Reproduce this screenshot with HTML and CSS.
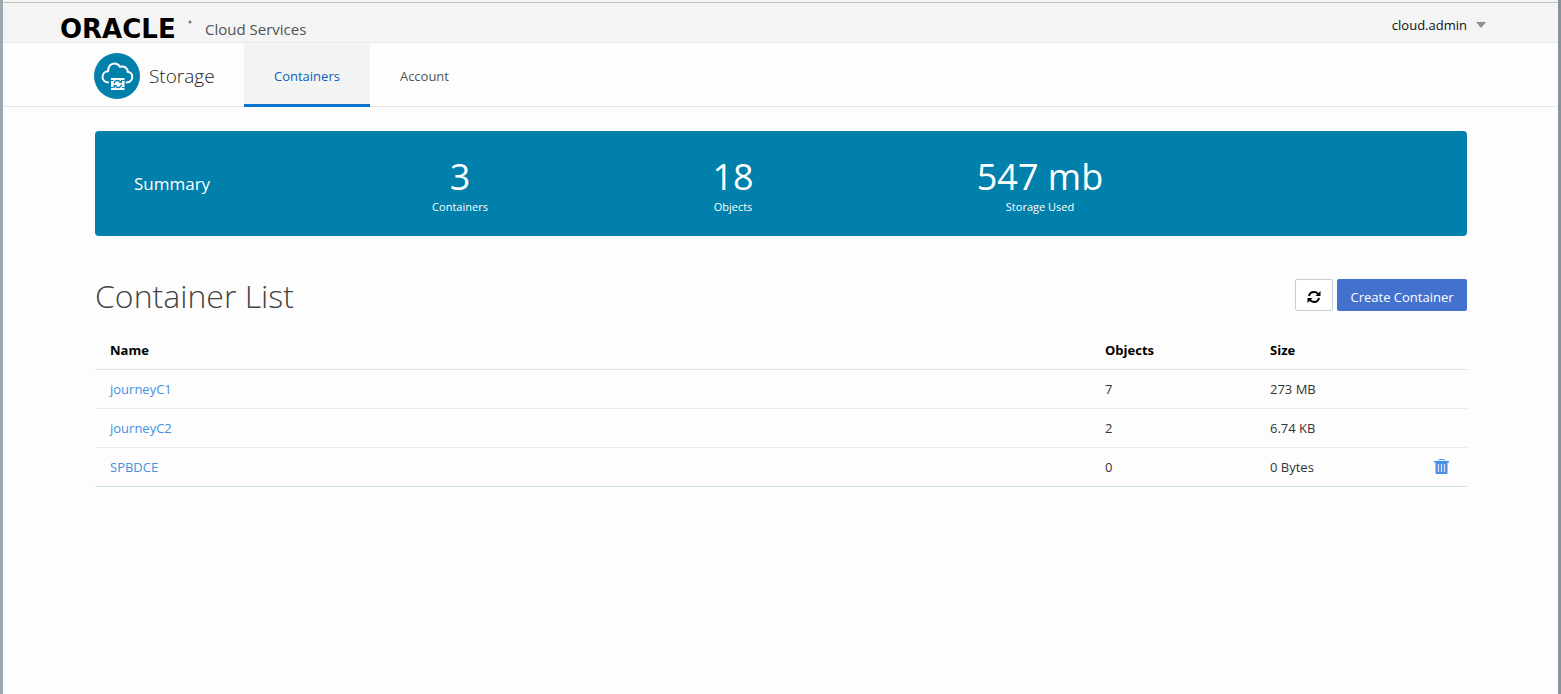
FILE: index.html
```html
<!DOCTYPE html>
<html lang="en">
<head>
<meta charset="utf-8">
<title>Oracle Cloud Services - Storage</title>
<link rel="stylesheet" href="styles.css">
</head>
<body>
<header class="topbar">
  <div class="brand">
    <svg class="logo" width="134" height="36" viewBox="0 0 134 36" role="img" aria-label="Oracle">
      <text class="logo-text" x="0" y="27">ORACLE</text>
      <circle cx="130" cy="11" r="1.500" fill="#777"/>
    </svg>
    <span class="brand-name">Cloud Services</span>
  </div>
  <button class="user" type="button">cloud.admin
    <svg width="10" height="6" viewBox="0 0 10 6" aria-hidden="true"><path d="M0 0h10L5 6z" fill="#8b8f91"/></svg>
  </button>
</header>
<nav class="nav">
  <div class="service">
    <svg width="46" height="46" viewBox="0 0 46 46" aria-hidden="true">
      <circle cx="23" cy="23" r="23" fill="#0080aa"/>
      <path d="M14 29.500c-3.500-.4-5.500-2.900-5.500-5.500 0-3.300 2.500-5.700 5.600-5.800C14 13.600 16.500 10.500 20.200 10.500c2.700 0 4.700 1.300 5.800 3.300 4.400-1.200 7.600 1.200 7.700 5 2.800.4 4.600 2.400 4.600 5 0 3.200-2.300 5.600-5.800 5.700" fill="none" stroke="#fff" stroke-width="2" stroke-linecap="round"/>
      <path d="M17 25h13.500v12H17z" fill="#fff"/>
      <path d="M17 27.500h2.500M28 27.500h2.500M17 34.500h2.500M28 34.500h2.500" stroke="#0080aa" stroke-width="1"/>
      <path d="M20 30.500c.5-3 3.500-4 5.700-2.200M27.500 31.500c-.5 3-3.500 4-5.700 2.200" fill="none" stroke="#0080aa" stroke-width="1.500"/>
      <path d="M24.500 30h3.500v-3.500zM23 32h-3.500v3.500z" fill="#0080aa"/>
    </svg>
    <span class="service-name">Storage</span>
  </div>
  <a class="tab tab-active" href="#containers">Containers</a>
  <a class="tab" href="#account">Account</a>
</nav>
<main class="content">
  <section class="summary">
    <h2 class="summary-title">Summary</h2>
    <div class="stat"><span class="stat-value">3</span><span class="stat-label">Containers</span></div>
    <div class="stat"><span class="stat-value">18</span><span class="stat-label">Objects</span></div>
    <div class="stat"><span class="stat-value">547 mb</span><span class="stat-label">Storage Used</span></div>
  </section>
  <div class="list-head">
    <h1 class="title">Container List</h1>
    <div class="actions">
      <button class="btn btn-refresh" type="button" aria-label="Refresh">
        <svg width="14" height="14" viewBox="0 0 14 14" aria-hidden="true">
          <path d="M2 6C2.500 3.500 4.500 2 7 2c1.600 0 3 .7 4 1.800M12 8c-.5 2.500-2.500 4-5 4-1.600 0-3-.7-4-1.800" fill="none" stroke="#000" stroke-width="2"/>
          <path d="M13.500 1v5h-5zM.5 13V8h5z" fill="#000"/>
        </svg>
      </button>
      <button class="btn btn-primary" type="button">Create Container</button>
    </div>
  </div>
  <table class="table">
    <thead>
      <tr><th class="col-name" scope="col">Name</th><th class="col-num" scope="col">Objects</th><th class="col-num" scope="col">Size</th><td class="col-action"></td></tr>
    </thead>
    <tbody>
      <tr><td><a href="#journeyC1">journeyC1</a></td><td>7</td><td>273 MB</td><td></td></tr>
      <tr><td><a href="#journeyC2">journeyC2</a></td><td>2</td><td>6.74 KB</td><td></td></tr>
      <tr><td><a href="#SPBDCE">SPBDCE</a></td><td>0</td><td>0 Bytes</td><td>
        <button class="delete" type="button" aria-label="Delete SPBDCE">
          <svg width="15" height="15" viewBox="0 0 15 15" aria-hidden="true">
            <path d="M4.500 2.500v-1q0-1 1-1h4q1 0 1 1v1" fill="none" stroke="#4a90e2"/>
            <path d="M0 2h15v1.500h-1.500V14q0 1-1 1h-10q-1 0-1-1V3.500H0z" fill="#4a90e2"/>
            <path d="M4.500 5v8M7.500 5v8M10.500 5v8" stroke="#e3ddf8" stroke-width="1.200"/>
          </svg>
        </button></td></tr>
    </tbody>
  </table>
</main>
</body>
</html>
```
FILE: styles.css
```css
* { box-sizing: border-box; }
body {
  margin: 0;
  min-height: 100vh;
  border-left: 3px solid #9da8ae;
  border-right: 3px solid #84949b;
  background: #fdfdfd;
  color: #333;
  font: 13px/20px "Open Sans", "Noto Sans", sans-serif;
}
h1, h2 { margin: 0; font-weight: 400; }
a { color: #4590e2; text-decoration: none; }
button { font: inherit; cursor: pointer; }

.topbar {
  display: flex;
  justify-content: space-between;
  height: 43px;
  padding: 7px 72px 0 57px;
  border-bottom: 1px solid #e6e9ed;
  background: linear-gradient(#f3f4f3 2px, #c0c4c1 2px, #c0c4c1 3px, #f3f4f3 3px);
}
.brand { display: flex; align-items: center; gap: 11px; padding-top: 8px; }
.logo { margin: -4px 0; }
.logo-text {
  font: bold 26px "DejaVu Sans", sans-serif;
  fill: #000;
}
.brand-name { font-size: 15px; color: #505356; }
.user {
  display: flex;
  align-items: center;
  align-self: flex-start;
  gap: 9px;
  padding: 8px 0;
  border: 0;
  background: none;
  color: #111;
}

.nav {
  display: flex;
  height: 64px;
  padding-left: 91px;
  border-bottom: 1px solid #e4e7ea;
}
.service { display: flex; align-items: center; gap: 9px; width: 150px; padding-top: 3px; }
.service-name { font-size: 19px; font-weight: 300; color: #222; }
.tab {
  display: flex;
  align-items: center;
  height: 64px;
  padding: 5px 30px 0;
  border-bottom: 3px solid transparent;
  color: #505356;
}
.tab-active { background: #f2f4f3; border-color: #0572ce; color: #0a5fb8; }

.content { padding: 24px 91px 0 92px; }
.summary {
  display: grid;
  grid-template-columns: 233fr 264fr 282fr 332fr 261fr;
  align-items: center;
  height: 105px;
  border-radius: 4px;
  background: #0080aa;
  color: #fff;
}
.summary-title { padding-left: 39px; font-size: 17px; }
.stat { display: flex; flex-direction: column; align-items: center; padding-top: 3px; }
.stat-value { font-size: 36px; line-height: 44px; }
.stat-label { font-size: 11px; line-height: 16px; }

.list-head { display: flex; justify-content: space-between; padding-top: 40px; }
.title { font-size: 32px; line-height: 40px; font-weight: 300; color: #444; }
.actions { display: flex; gap: 4px; padding-top: 3px; }
.btn { height: 32px; border-radius: 2px; }
.btn-refresh {
  display: flex;
  align-items: center;
  justify-content: center;
  width: 38px;
  padding: 4px 0 0;
  border: 1px solid #c4ced7;
  background: #fff;
}
.btn-primary { width: 130px; padding: 4px 0 0; border: 0; background: #4272ce; color: #fff; }

.table { width: 100%; margin-top: 15px; border-collapse: collapse; table-layout: fixed; }
.table th, .table td {
  height: 39px;
  padding: 0 15px;
  border-bottom: 1px solid #e8ebe9;
  text-align: left;
}
.table th { color: #000; font-weight: 700; }
.table thead th, .table thead td { height: 38px; border-color: #dfe2e3; }
.table tbody tr:last-child td { border-color: #d2e2ec; }
.col-num { width: 165px; }
.col-action { width: 47px; }
.table td:last-child { padding: 0 0 0 14px; }
.delete { display: block; padding: 0; border: 0; background: none; }
.delete svg { display: block; }
```
